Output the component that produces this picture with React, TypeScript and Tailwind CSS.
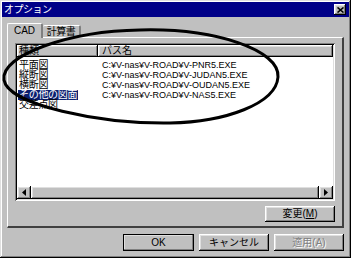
import React from "react";

// ─── Data ───────────────────────────────────────────────────

const rows = [
  { kind: "平面図", path: "C:¥V-nas¥V-ROAD¥V-PNR5.EXE" },
  { kind: "縦断図", path: "C:¥V-nas¥V-ROAD¥V-JUDAN5.EXE" },
  { kind: "横断図", path: "C:¥V-nas¥V-ROAD¥V-OUDAN5.EXE" },
  { kind: "その他の図面", path: "C:¥V-nas¥V-ROAD¥V-NAS5.EXE", selected: true },
  { kind: "交差点図", path: "" },
];

const raised =
  "shadow-[inset_-1px_-1px_#000,inset_1px_1px_#fff,inset_-2px_-2px_#808080,inset_2px_2px_#dfdfdf]";
const sunken =
  "shadow-[inset_1px_1px_#808080,inset_-1px_-1px_#fff,inset_2px_2px_#000,inset_-2px_-2px_#dfdfdf]";

// ─── Pieces ─────────────────────────────────────────────────

function Button({
  children,
  className = "",
  disabled,
}: {
  children: React.ReactNode;
  className?: string;
  disabled?: boolean;
}) {
  return (
    <div
      className={`flex items-center justify-center bg-[#c0c0c0] text-[10px] leading-none ${raised} ${
        disabled ? "text-[#808080] [text-shadow:1px_1px_0_#fff]" : "text-black"
      } ${className}`}
    >
      {children}
    </div>
  );
}

function Arrow({ dir }: { dir: "left" | "right" }) {
  return (
    <div className={`w-[14px] h-full bg-[#c0c0c0] flex items-center justify-center ${raised}`}>
      <svg width="4" height="7" viewBox="0 0 4 7">
        {dir === "left" ? (
          <path d="M4 0 L0 3.5 L4 7 Z" fill="#000" />
        ) : (
          <path d="M0 0 L4 3.5 L0 7 Z" fill="#000" />
        )}
      </svg>
    </div>
  );
}

function ListBox() {
  return (
    <div className={`h-[158px] bg-white p-[2px] flex flex-col ${sunken}`}>
      {/* header */}
      <div className="flex h-[12px] text-[10px] leading-none text-black">
        <div className={`w-[81px] bg-[#c0c0c0] pl-[2px] flex items-center ${raised}`}>種類</div>
        <div className={`flex-1 bg-[#c0c0c0] pl-[4px] flex items-center ${raised}`}>パス名</div>
      </div>

      {/* rows */}
      <div className="flex-1 pt-[3px]">
        {rows.map((r) => (
          <div key={r.kind} className="flex h-[10px] items-center text-[10px] leading-none">
            <div className="w-[81px] pl-[1px]">
              <span
                className={`px-[1px] h-[10px] inline-flex items-center tracking-[-0.3px] ${
                  r.selected ? "bg-[#0a1e6e] text-white" : "text-black"
                }`}
              >
                {r.kind}
              </span>
            </div>
            <div className="pl-[4px] text-[9px] font-['Liberation_Sans',sans-serif] text-black">{r.path}</div>
          </div>
        ))}
      </div>

      {/* horizontal scrollbar */}
      <div className="h-[13px] flex bg-[#e0e0e0]">
        <Arrow dir="left" />
        <div className={`flex-1 bg-[#c0c0c0] ${raised}`} />
        <Arrow dir="right" />
      </div>
    </div>
  );
}

// ─── Main ───────────────────────────────────────────────────

export default function App() {
  return (
    <div className="relative w-[351px] h-[258px] overflow-hidden bg-[#c0c0c0] font-['Liberation_Sans','Noto_Sans_CJK_JP',sans-serif] shadow-[inset_-1px_-1px_#000,inset_1px_1px_#dfdfdf,inset_-2px_-2px_#808080,inset_2px_2px_#fff] p-[2px] flex flex-col">
      {/* title bar */}
      <div className="h-[15px] bg-[#000088] flex items-center justify-between pl-[2px] pr-[3px]">
        <span className="text-white text-[10px] leading-none tracking-[-0.5px]">オプション</span>
        <div className={`w-[12px] h-[11px] bg-[#c0c0c0] flex items-center justify-center ${raised}`}>
          <svg width="7" height="6" viewBox="0 0 7 6">
            <path d="M0.5 0.5 L6.5 5.5 M6.5 0.5 L0.5 5.5" stroke="#000" strokeWidth="1.6" />
          </svg>
        </div>
      </div>

      {/* tabs */}
      <div className="mt-[6px] ml-[5px] flex items-end h-[14px]">
        <div className="h-[15px] w-[36px] bg-[#c0c0c0] border-l border-t border-white border-r-2 border-r-[#808080] rounded-t-[2px] flex items-center justify-center text-[10px] leading-none text-black relative z-10 -mb-[1px]">
          CAD
        </div>
        <div className="h-[12px] w-[38px] bg-[#c0c0c0] border-t border-white border-r-2 border-r-[#808080] rounded-t-[2px] flex items-center justify-center text-[10px] leading-none text-black tracking-[-0.5px]">
          計算書
        </div>
      </div>

      {/* tab panel */}
      <div className="ml-[5px] mr-[5px] h-[191px] border-l border-t border-white border-r-2 border-b-2 border-r-[#404040] border-b-[#404040] px-[7px] pt-[5px] flex flex-col">
        <ListBox />
        <div className="flex justify-end mt-[5px]">
          <Button className="w-[70px] h-[16px]">
            変更(<span className="underline">M</span>)
          </Button>
        </div>
      </div>

      {/* bottom buttons */}
      <div className="mt-[6px] flex justify-end gap-[5px] pr-[5px]">
        <Button className="w-[71px] h-[17px] outline outline-1 outline-black -outline-offset-1">OK</Button>
        <Button className="w-[70px] h-[17px]">キャンセル</Button>
        <Button className="w-[70px] h-[17px]" disabled>
          適用(A)
        </Button>
      </div>

      {/* hand-drawn ellipse */}
      <svg className="absolute left-0 top-0 pointer-events-none" width="351" height="258" viewBox="0 0 351 258">
        <path
          d="M140 30 C 215 28, 280 50, 278 77 C 276 104, 225 122, 170 123 C 100 124, 8 105, 4 80 C 0 55, 70 31, 140 30 Z"
          fill="none"
          stroke="#000"
          strokeWidth="3"
        />
      </svg>
    </div>
  );
}
